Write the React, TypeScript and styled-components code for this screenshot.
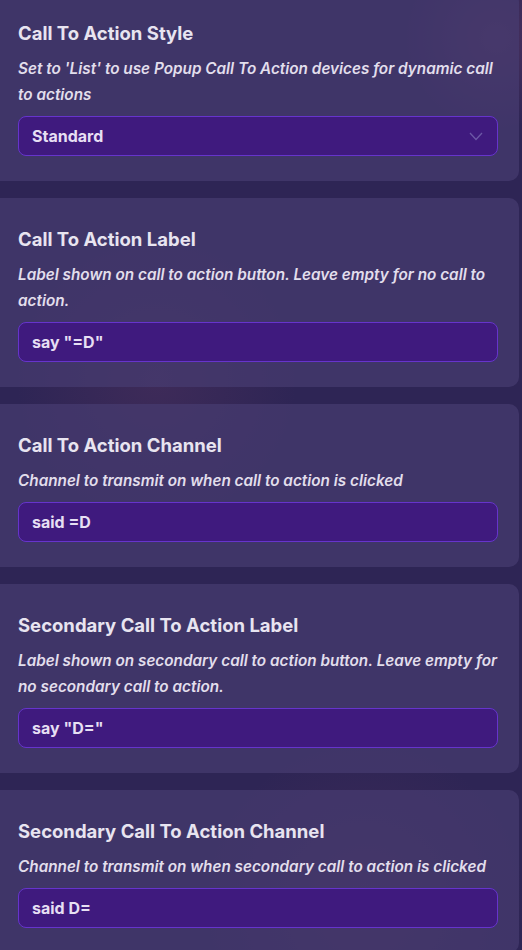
import styled, { createGlobalStyle } from 'styled-components';

const GlobalStyle = createGlobalStyle`
  html, body {
    margin: 0;
    padding: 0;
    overflow: hidden;
    background: #2e2555;
  }
  body {
    font-family: Inter, 'Liberation Sans', sans-serif;
  }
`;

const settings = [
  {
    title: 'Call To Action Style',
    desc: "Set to 'List' to use Popup Call To Action devices for dynamic call to actions",
    value: 'Standard',
    select: true,
  },
  {
    title: 'Call To Action Label',
    desc: 'Label shown on call to action button. Leave empty for no call to action.',
    value: 'say "=D"',
  },
  {
    title: 'Call To Action Channel',
    desc: 'Channel to transmit on when call to action is clicked',
    value: 'said =D',
  },
  {
    title: 'Secondary Call To Action Label',
    desc: 'Label shown on secondary call to action button. Leave empty for no secondary call to action.',
    value: 'say "D="',
  },
  {
    title: 'Secondary Call To Action Channel',
    desc: 'Channel to transmit on when secondary call to action is clicked',
    value: 'said D=',
  },
];

const Chevron = () => (
  <svg width="14" height="9" viewBox="0 0 14 9" fill="none">
    <path d="M1 1l6 6.5L13 1" stroke="#6c58a6" strokeWidth="1.3" />
  </svg>
);

const App = () => {
  return (
    <Page>
      <GlobalStyle />
      <List>
        {settings.map(item => (
          <Card key={item.title}>
            <Title>{item.title}</Title>
            <Desc>{item.desc}</Desc>
            <Field>
              <FieldText>{item.value}</FieldText>
              {item.select && <Chevron />}
            </Field>
          </Card>
        ))}
      </List>
    </Page>
  );
};

export default App;

const Page = styled.div`
  width: 522px;
  height: 950px;
  overflow: hidden;
  background:
    radial-gradient(circle at 95% 4%, rgba(120, 70, 110, 0.35), transparent 90px),
    radial-gradient(circle at 30% 40%, rgba(110, 60, 100, 0.25), transparent 140px),
    radial-gradient(circle at 70% 95%, rgba(110, 60, 100, 0.25), transparent 160px),
    #2e2555;
`;

const List = styled.div`
  display: flex;
  flex-direction: column;
  gap: 17px;
  margin: -8px 0 0 -12px;
  width: 531px;
`;

const Card = styled.div`
  background: rgba(70, 60, 112, 0.72);
  border-radius: 10px;
  padding: 30px 21px 25px 30px;
  box-sizing: border-box;
`;

const Title = styled.div`
  font-size: 18.5px;
  font-weight: 700;
  color: #e8e4f0;
  line-height: 22px;
`;

const Desc = styled.div`
  margin-top: 12px;
  font-size: 15.3px;
  font-weight: 600;
  font-style: italic;
  line-height: 26px;
  color: #e2deec;
`;

const Field = styled.div`
  margin-top: 8px;
  height: 40px;
  box-sizing: border-box;
  border: 1px solid #6634cc;
  border-radius: 8px;
  background: #3f1a7e;
  display: flex;
  align-items: center;
  justify-content: space-between;
  padding: 0 14px 0 13px;
`;

const FieldText = styled.span`
  font-size: 16px;
  font-weight: 700;
  color: #e6dff3;
`;
